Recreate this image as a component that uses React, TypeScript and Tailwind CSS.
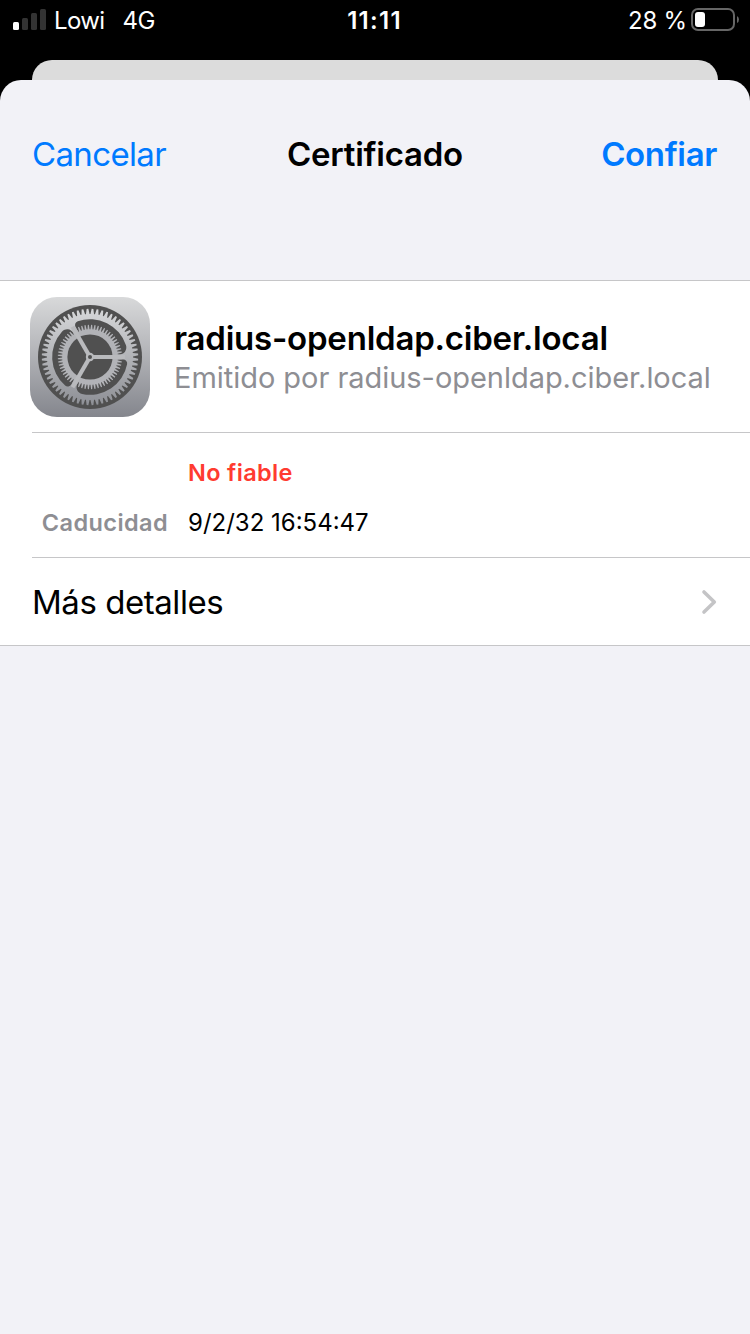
import React from "react";

const rad = (deg: number) => (deg * Math.PI) / 180;
const pt = (r: number, deg: number) =>
  `${(r * Math.cos(rad(deg))).toFixed(2)} ${(r * Math.sin(rad(deg))).toFixed(2)}`;

// Closed outline of a gear with tapered teeth.
function gear(teeth: number, root: number, tip: number, rootHalf: number, tipHalf: number) {
  const step = 360 / teeth;
  const points: string[] = [];
  for (let i = 0; i < teeth; i++) {
    const a = i * step + step / 2;
    points.push(
      pt(root, a - step * rootHalf),
      pt(tip, a - step * tipHalf),
      pt(tip, a + step * tipHalf),
      pt(root, a + step * rootHalf),
    );
  }
  return `M${points.join("L")}Z`;
}

// One third of the disc between two spokes, with rounded outer corners.
const sector =
  "M1.44 2.5 L33.2 2.5 A4 4 0 0 1 37.1 7.3 A37.8 37.8 0 0 1 -7.9 37 A7 7 0 0 1 -12.5 26.6Z";

function SettingsIcon() {
  return (
    <svg viewBox="-60 -60 120 120" className="size-[120px] shrink-0">
      <defs>
        <linearGradient id="tile" x1="0" y1="0" x2="0" y2="1">
          <stop offset="0" stopColor="#d8d9da" />
          <stop offset="0.45" stopColor="#b4b5b9" />
          <stop offset="1" stopColor="#84868d" />
        </linearGradient>
        <linearGradient id="outer" gradientUnits="userSpaceOnUse" x1="0" y1="-48" x2="0" y2="48">
          <stop offset="0" stopColor="#d6d7d9" />
          <stop offset="1" stopColor="#8e9096" />
        </linearGradient>
      </defs>
      <rect x="-60" y="-60" width="120" height="120" rx="27" fill="url(#tile)" />
      <circle r="52" fill="#505050" />
      <path d={gear(60, 43, 48.2, 0.4, 0.17)} fill="url(#outer)" />
      {[0, 120, 240].map((a) => (
        <path key={a} d={sector} transform={`rotate(${a})`} fill="#505050" />
      ))}
      <path d={gear(60, 27.8, 32.2, 0.36, 0.16)} fill="#b2b3b7" />
      <circle r="22.6" fill="#505050" />
      {[0, 120, 240].map((a) => (
        <path key={a} d="M0 -2.1 H35 V2.1 H0Z" transform={`rotate(${a})`} fill="#b9babd" />
      ))}
      <circle r="4.2" fill="#b9babd" />
      <circle r="2" fill="#505050" />
    </svg>
  );
}

function StatusBar() {
  return (
    <div className="flex h-10 items-start justify-between pr-[11px] pl-[13px] text-white">
      <div className="flex w-[240px] items-start">
        <svg viewBox="0 0 33 21" className="mt-[9px] h-[21px] w-[33px]">
          <rect x="0" y="13" width="6" height="8" rx="1.5" fill="#fff" />
          <rect x="9" y="9" width="6" height="12" rx="1.5" fill="#333" />
          <rect x="18" y="4" width="6" height="17" rx="1.5" fill="#333" />
          <rect x="27" y="0" width="6" height="21" rx="1.5" fill="#333" />
        </svg>
        <span className="ml-2 text-[24px] leading-[42px] tracking-[-0.6px]">Lowi</span>
        <span className="ml-[18px] text-[24px] leading-[42px] tracking-[-0.6px]">4G</span>
      </div>
      <span className="pr-[3px] text-[24px] leading-[42px] font-semibold tracking-[1.3px]">11:11</span>
      <div className="flex w-[240px] items-start justify-end">
        <span className="text-[24px] leading-[42px] tracking-[-0.2px]">28 %</span>
        <svg viewBox="0 0 48 23" className="mt-2 ml-1 h-[23px] w-12">
          <rect x="1" y="1" width="42" height="21" rx="6" fill="none" stroke="#666" strokeWidth="2" />
          <rect x="4" y="4" width="10" height="15" rx="3" fill="#fff" />
          <path d="M46 8 Q48 9 48 11.5 Q48 14 46 15Z" fill="#666" />
        </svg>
      </div>
    </div>
  );
}

export default function App() {
  return (
    <div className="flex h-[1334px] w-[750px] flex-col overflow-hidden bg-black font-['Inter',sans-serif] text-black">
      <StatusBar />
      <div className="mx-8 mt-5 h-5 shrink-0 rounded-t-[20px] bg-[#dcdcdc]" />
      <main className="flex grow flex-col rounded-t-[21px] bg-[#f2f2f7]">
        <header className="grid h-[200px] grid-cols-3 items-start px-8 pt-[54px] text-[33px] leading-10">
          <button className="text-left tracking-[-0.65px] text-[#007aff]">Cancelar</button>
          <h1 className="text-center font-semibold tracking-[-0.25px]">Certificado</h1>
          <button className="pr-px text-right font-semibold tracking-[-0.35px] text-[#007aff]">Confiar</button>
        </header>
        <section className="border-y border-[#c6c6c8] bg-white">
          <div className="flex h-[151px] items-center pl-[30px]">
            <SettingsIcon />
            <div className="ml-6 pt-0.5 whitespace-nowrap">
              <div className="text-[33px] leading-10 font-semibold tracking-[-0.22px]">radius-openldap.ciber.local</div>
              <div className="text-[29px] leading-10 tracking-[-0.04px] text-[#8e8e93]">Emitido por radius-openldap.ciber.local</div>
            </div>
          </div>
          <div className="ml-8 h-[126px] border-y border-[#c6c6c8] pt-[25px] text-[24px] leading-[30px]">
            <div className="ml-[156px] text-[23.5px] font-semibold tracking-[0.35px] text-[#ff3b30]">No fiable</div>
            <div className="mt-5 flex">
              <span className="w-[136px] text-right text-[23.5px] font-semibold tracking-[0.4px] text-[#8e8e93]">Caducidad</span>
              <span className="ml-5">9/2/32 16:54:47</span>
            </div>
          </div>
          <button className="flex h-[87px] w-full items-center justify-between pr-[33px] pl-8 text-[33px]">
            <span className="pt-0.5 tracking-[-0.45px]">Más detalles</span>
            <svg viewBox="0 0 16 26" className="h-[26px] w-4">
              <path d="M3 3 L13.3 13 L3 23" fill="none" stroke="#c4c4c6" strokeWidth="3.6" strokeLinecap="round" strokeLinejoin="round" />
            </svg>
          </button>
        </section>
      </main>
    </div>
  );
}
